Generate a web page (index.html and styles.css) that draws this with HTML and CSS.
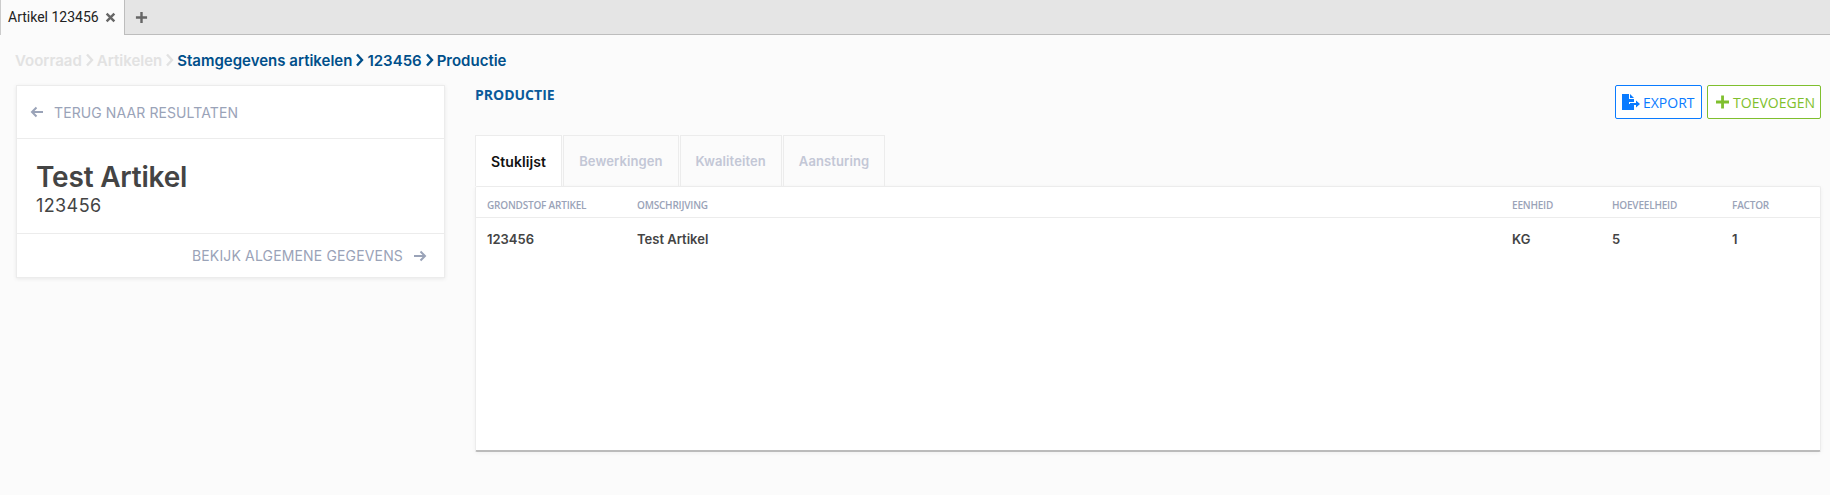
FILE: index.html
```html
<!DOCTYPE html>
<html lang="en">
<head>
    <meta charset="UTF-8">
    <meta name="viewport" content="width=device-width, initial-scale=1.0">
    <title>Artikel 123456</title>
    <link rel="stylesheet" href="styles.css">
</head>
<body>
    <div class="tabbar">
        <div class="doc-tab">
            <span>Artikel 123456</span>
            <svg class="doc-close" viewBox="0 0 10 10"><path d="M1.5 1.5l7 7M8.5 1.5l-7 7"/></svg>
        </div>
        <svg class="doc-add" viewBox="0 0 14 14"><path d="M7 1v12M1 7h12"/></svg>
    </div>

    <div class="breadcrumb">
        <span class="crumb-off">Voorraad</span>
        <svg class="chev chev-off" viewBox="0 0 8 14"><path d="M1.5 1.5L6.5 7l-5 5.5"/></svg>
        <span class="crumb-off">Artikelen</span>
        <svg class="chev chev-off" viewBox="0 0 8 14"><path d="M1.5 1.5L6.5 7l-5 5.5"/></svg>
        <span>Stamgegevens artikelen</span>
        <svg class="chev" viewBox="0 0 8 14"><path d="M1.5 1.5L6.5 7l-5 5.5"/></svg>
        <span>123456</span>
        <svg class="chev" viewBox="0 0 8 14"><path d="M1.5 1.5L6.5 7l-5 5.5"/></svg>
        <span>Productie</span>
    </div>

    <div class="content">
        <div class="side-card">
            <div class="back-row">
                <svg class="arrow" viewBox="0 0 14 12"><path d="M13 6H2M6.5 1.5L2 6l4.5 4.5"/></svg>
                <span>TERUG NAAR RESULTATEN</span>
            </div>
            <div class="article-info">
                <div class="article-name">Test Artikel</div>
                <div class="article-code">123456</div>
            </div>
            <div class="more-row">
                <span>BEKIJK ALGEMENE GEGEVENS</span>
                <svg class="arrow" viewBox="0 0 14 12"><path d="M1 6h11M7.5 1.5L12 6l-4.5 4.5"/></svg>
            </div>
        </div>

        <div class="main">
            <div class="main-head">
                <h2>PRODUCTIE</h2>
                <div class="actions">
                    <button class="btn btn-export">
                        <svg class="btn-icon" viewBox="0 0 18 16"><path class="fill" d="M0 0h7v5h5v3H7v2h5v6H0zM8 0l4 4H8zM8 9h6V6.5L18 10l-4 3.5V11H8z"/></svg>
                        EXPORT
                    </button>
                    <button class="btn btn-add">
                        <svg class="btn-icon add-icon" viewBox="0 0 14 14"><path d="M7 0v14M0 7h14"/></svg>
                        TOEVOEGEN
                    </button>
                </div>
            </div>

            <div class="tabs">
                <div class="tab active">Stuklijst</div>
                <div class="tab">Bewerkingen</div>
                <div class="tab">Kwaliteiten</div>
                <div class="tab">Aansturing</div>
            </div>

            <div class="table-card">
                <div class="row row-head">
                    <div>GRONDSTOF ARTIKEL</div>
                    <div>OMSCHRIJVING</div>
                    <div>EENHEID</div>
                    <div>HOEVEELHEID</div>
                    <div>FACTOR</div>
                </div>
                <div class="row row-body">
                    <div>123456</div>
                    <div>Test Artikel</div>
                    <div>KG</div>
                    <div>5</div>
                    <div>1</div>
                </div>
            </div>
        </div>
    </div>
</body>
</html>
```

FILE: styles.css
```css
* {
    box-sizing: border-box;
}

body {
    margin: 0;
    height: 495px;
    overflow: hidden;
    font-family: "Inter", "Liberation Sans", sans-serif;
    background-color: #fbfbfb;
    color: #444;
}

svg {
    display: block;
    fill: none;
    stroke: currentColor;
}

.tabbar {
    display: flex;
    align-items: center;
    height: 35px;
    background-color: #e5e5e5;
    border-bottom: 1px solid #bdbdbd;
}

.doc-tab {
    display: flex;
    align-items: center;
    gap: 6px;
    flex: none;
    width: 125px;
    height: 35px;
    padding-left: 7px;
    font-family: "Roboto", sans-serif;
    font-size: 14px;
    white-space: nowrap;
    color: #222;
    background-color: #fbfbfb;
    border-left: 1px solid #ccc;
    border-right: 1px solid #bdbdbd;
}

.doc-close {
    width: 11px;
    height: 11px;
    color: #666;
    stroke-width: 2.2;
}

.doc-add {
    width: 13px;
    height: 13px;
    margin-left: 10px;
    color: #666;
    stroke-width: 2.6;
}

.breadcrumb {
    display: flex;
    align-items: center;
    gap: 3px;
    height: 20px;
    margin: 15px 0 0 15px;
    font-size: 15px;
    font-weight: 600;
    color: #004f8a;
}

.crumb-off {
    color: #e2e2e2;
}

.chev {
    width: 9px;
    height: 14px;
    stroke-width: 2.4;
}

.chev-off {
    color: #e2e2e2;
}

.content {
    display: flex;
    align-items: flex-start;
    margin-top: 15px;
    padding-left: 16px;
}

.side-card {
    width: 429px;
    background-color: #fff;
    border: 1px solid #ececec;
    box-shadow: 0 1px 4px rgba(0, 0, 0, 0.08);
    color: #9aa3b8;
}

.arrow {
    width: 14px;
    height: 12px;
    stroke-width: 2;
}

.back-row {
    display: flex;
    align-items: center;
    gap: 10px;
    height: 53px;
    padding-left: 13px;
    font-size: 14px;
    letter-spacing: 0.1px;
    border-bottom: 1px solid #ececec;
}

.article-info {
    height: 95px;
    padding-top: 22px;
    padding-left: 19px;
    color: #444;
    border-bottom: 1px solid #ececec;
}

.article-name {
    font-size: 28px;
    font-weight: 600;
    line-height: 32px;
    letter-spacing: -0.2px;
}

.article-code {
    margin-top: 2px;
    font-size: 18px;
    line-height: 22px;
    letter-spacing: 0.4px;
}

.more-row {
    display: flex;
    align-items: center;
    justify-content: flex-end;
    gap: 10px;
    height: 43px;
    padding-right: 17px;
    font-size: 14px;
    letter-spacing: 0.15px;
}

.main {
    width: 1346px;
    margin-left: 30px;
}

.main-head {
    display: flex;
    justify-content: space-between;
    height: 50px;
}

.main-head h2 {
    margin: 0;
    font-family: "Open Sans", sans-serif;
    font-size: 14px;
    font-weight: 700;
    color: #0a5a9a;
}

.actions {
    display: flex;
    gap: 5px;
}

.btn {
    display: flex;
    align-items: center;
    height: 34px;
    padding: 0 5px 0 6px;
    gap: 3px;
    font-family: "Open Sans", sans-serif;
    font-size: 14px;
    background-color: #fff;
    border: 1px solid;
    border-radius: 2px;
}

.btn-export {
    width: 87px;
    color: #0a7bff;
}

.btn-add {
    width: 114px;
    padding-left: 8px;
    gap: 4px;
    color: #7fbf2e;
}

.btn-icon {
    width: 18px;
    height: 16px;
}

.btn-icon .fill {
    fill: currentColor;
    stroke: none;
}

.add-icon {
    width: 14px;
    height: 14px;
    stroke-width: 3;
}

.tabs {
    display: flex;
    height: 51px;
}

.tab {
    display: flex;
    align-items: center;
    padding: 0 15px;
    margin-right: 1px;
    font-size: 13px;
    font-weight: 600;
    letter-spacing: 0.1px;
    color: #c3c7d6;
    border: 1px solid #ececec;
    border-bottom: none;
}

.tab.active {
    font-size: 14px;
    color: #111;
    background-color: #fff;
}

.table-card {
    height: 266px;
    background-color: #fff;
    border: 1px solid #ececec;
    border-bottom: 2px solid #bbb;
    border-radius: 2px;
    box-shadow: 0 1px 4px rgba(0, 0, 0, 0.05);
}

.row {
    display: grid;
    grid-template-columns: 150px 875px 100px 120px 1fr;
    padding-left: 11px;
}

.row-head {
    align-items: center;
    height: 31px;
    padding-top: 6px;
    font-family: "Open Sans", sans-serif;
    font-size: 10px;
    font-weight: 600;
    letter-spacing: -0.2px;
    color: #9aa3b8;
    border-bottom: 1px solid #ececec;
}

.row-body {
    align-items: center;
    height: 37px;
    padding-top: 4px;
    font-size: 13px;
    font-weight: 600;
    color: #444;
}
```
